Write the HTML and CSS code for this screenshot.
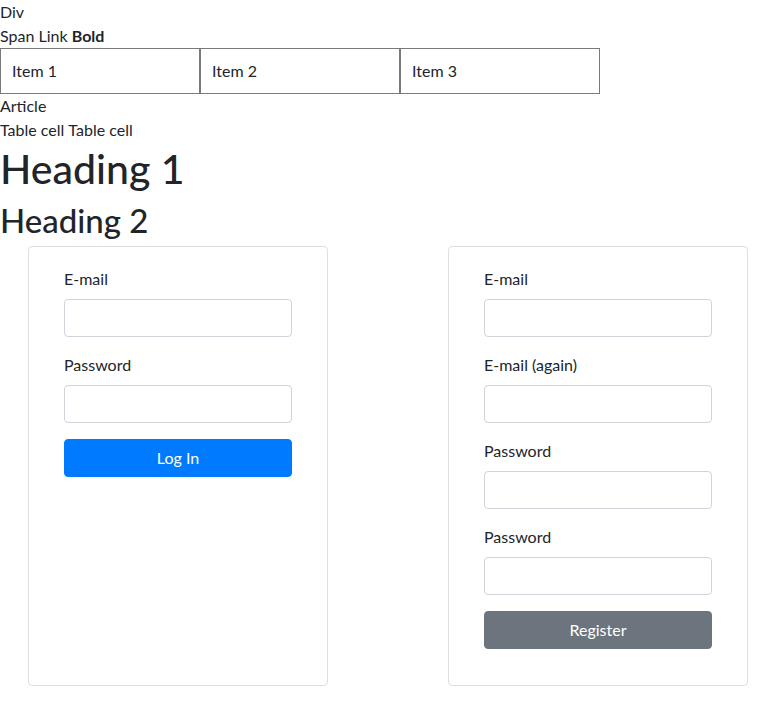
FILE: index.html
```html
<!DOCTYPE html>
<html lang="en">
<head>
<meta charset="utf-8">
<title>Forms</title>
<link rel="stylesheet" href="styles.css">
</head>
<body>
<div>Div</div>
<span>Span</span> <a class="link" href="#">Link</a> <b>Bold</b>
<ul class="items">
  <li class="item">Item 1</li>
  <li class="item">Item 2</li>
  <li class="item">Item 3</li>
</ul>
<article>Article</article>
<table class="tbl"><tr><td>Table cell</td><td>Table cell</td></tr></table>
<h1>Heading 1</h1>
<h2>Heading 2</h2>
<div class="row">
  <form class="card">
    <div class="group">
      <label class="lbl">E-mail</label>
      <input class="input" type="email">
    </div>
    <div class="group">
      <label class="lbl">Password</label>
      <input class="input" type="password">
    </div>
    <button class="btn btn-primary" type="button">Log In</button>
  </form>
  <form class="card">
    <div class="group">
      <label class="lbl">E-mail</label>
      <input class="input" type="email">
    </div>
    <div class="group">
      <label class="lbl">E-mail (again)</label>
      <input class="input" type="email">
    </div>
    <div class="group">
      <label class="lbl">Password</label>
      <input class="input" type="password">
    </div>
    <div class="group">
      <label class="lbl">Password</label>
      <input class="input" type="password">
    </div>
    <button class="btn btn-secondary" type="button">Register</button>
  </form>
</div>
</body>
</html>
```
FILE: styles.css
```css
* { box-sizing: border-box; }
body {
  margin: 0;
  font-family: Lato, "Noto Sans", sans-serif;
  font-size: 16px;
  line-height: 24px;
  color: #212529;
  background: #fff;
}
.link { color: #212529; text-decoration: none; }
b { font-weight: 700; }
.items {
  display: flex;
  list-style: none;
  margin: 0;
  padding: 0;
}
.item {
  width: 200px;
  border: 1px solid #7a7a7a;
  padding: 10px 11px;
  line-height: 24px;
}
article { display: block; }
.tbl { border-collapse: separate; border-spacing: 0; }
.tbl td { padding: 0; padding-right: 4px; }
.tbl td:last-child { padding-right: 0; }
h1 {
  margin: 0 0 5px;
  padding-top: 3px;
  font-size: 41px;
  line-height: 48px;
  font-weight: 500;
}
h2 {
  margin: 0 0 7px;
  padding-top: 3px;
  font-size: 33px;
  line-height: 38px;
  font-weight: 500;
}
.row {
  display: flex;
  align-items: stretch;
  gap: 120px;
  padding-left: 28px;
}
.card {
  width: 300px;
  height: 440px;
  margin: 0;
  border: 1px solid rgba(0,0,0,.125);
  border-radius: 4px;
  padding: 20px 35px;
}
.group { margin-bottom: 16px; }
.lbl { display: block; margin-bottom: 8px; line-height: 24px; }
.input {
  display: block;
  width: 100%;
  height: 38px;
  border: 1px solid #ced4da;
  border-radius: 4px;
  padding: 6px 12px;
  font: inherit;
  background: #fff;
}
.btn {
  display: block;
  width: 100%;
  height: 38px;
  border: 1px solid transparent;
  border-radius: 4px;
  font: inherit;
  color: #fff;
  padding: 6px 12px;
  line-height: 24px;
}
.btn-primary { background: #007bff; border-color: #007bff; }
.btn-secondary { background: #6c757d; border-color: #6c757d; }
```
